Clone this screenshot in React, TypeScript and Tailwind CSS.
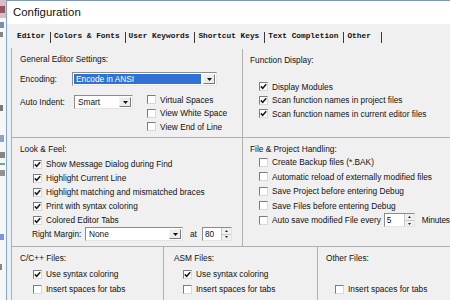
import React from "react";

const ui = { fontFamily: '"Liberation Sans", Arial, sans-serif' };
const mono = { fontFamily: '"Liberation Mono", "Courier New", monospace' };

type CheckProps = {
  label: string;
  checked?: boolean;
  h?: string;
};

const Check = ({ label, checked = false, h = "h-[14px]" }: CheckProps) => (
  <div className={`flex items-center gap-[4px] ${h}`}>
    <span className="flex h-[9px] w-[9px] shrink-0 items-center justify-center border border-t-[#7c7c7c] border-l-[#7c7c7c] border-r-[#d8d8d8] border-b-[#d8d8d8] bg-white">
      {checked && (
        <svg width="7" height="7" viewBox="0 0 7 7">
          <path d="M0.8 3.4 L2.7 5.3 L6.2 1.2" fill="none" stroke="#1a1a1a" strokeWidth="1.5" />
        </svg>
      )}
    </span>
    <span className="whitespace-nowrap leading-none">{label}</span>
  </div>
);

const Arrow = () => (
  <svg width="5" height="3" viewBox="0 0 5 3">
    <path d="M0 0 L5 0 L2.5 3 Z" fill="#111" />
  </svg>
);

type SelectProps = { value: string; w: string; active?: boolean };

const Select = ({ value, w, active = false }: SelectProps) => (
  <div className={`flex h-[14px] ${w} items-stretch border border-t-[#8c8c8c] border-l-[#8c8c8c] border-r-[#e4e4e4] border-b-[#e4e4e4] bg-white p-px`}>
    <div className={`flex flex-1 items-center pl-[2px] leading-none ${active ? "bg-[#2f72d6] text-white" : ""}`}>
      {value}
    </div>
    <div className="ml-[2px] flex w-[12px] items-center justify-center border border-t-[#f4f4f4] border-l-[#f4f4f4] border-r-[#7a7a7a] border-b-[#7a7a7a] bg-[#ececec]">
      <Arrow />
    </div>
  </div>
);

const Spin = ({ value, w }: { value: string; w: string }) => (
  <div className={`flex h-[14px] ${w} items-stretch border border-t-[#8c8c8c] border-l-[#8c8c8c] border-r-[#e4e4e4] border-b-[#e4e4e4] bg-white`}>
    <div className="flex flex-1 items-center pl-[2px] leading-none">{value}</div>
    <div className="flex w-[10px] flex-col border-l border-[#c8c8c8] bg-[#f0f0f0]">
      <div className="flex flex-1 items-center justify-center border-b border-[#c8c8c8]">
        <svg width="3" height="2" viewBox="0 0 3 2"><path d="M0 2 L3 2 L1.5 0 Z" fill="#222" /></svg>
      </div>
      <div className="flex flex-1 items-center justify-center">
        <svg width="3" height="2" viewBox="0 0 3 2"><path d="M0 0 L3 0 L1.5 2 Z" fill="#222" /></svg>
      </div>
    </div>
  </div>
);

const tabs = ["Editor", "Colors & Fonts", "User Keywords", "Shortcut Keys", "Text Completion", "Other "];

// bits of the window lying behind the dialog
const behind = [
  { t: "mt-[6px] h-[7px] w-[5px] bg-[#7a2a36]" },
  { t: "mt-[9px] h-[6px] w-[4px] bg-[#4a5f86]" },
  { t: "mt-[4px] h-[5px] w-[3px] bg-[#555]" },
  { t: "mt-[68px] h-[6px] w-[3px] bg-[#444]" },
  { t: "mt-[24px] h-[7px] w-[4px] bg-[#6a7fa4]" },
  { t: "mt-[10px] h-[6px] w-[5px] bg-[#555]" },
  { t: "mt-[5px] h-[2px] w-[5px] bg-[#3b8a3b]" },
  { t: "mt-[5px] h-[6px] w-[5px] bg-[#666]" },
  { t: "mt-[58px] h-[6px] w-[4px] bg-[#4a6ad0]" },
  { t: "mt-[24px] h-[6px] w-[2px] bg-[#555]" },
];

export default function App() {
  return (
    <div className="flex h-[300px] w-[450px] overflow-hidden bg-white text-[8.3px] text-[#111]" style={ui}>
      {/* window behind */}
      <div className="relative flex w-[6px] flex-col bg-[#f7f7f7]">
        <div className="absolute top-0 left-0 h-[18px] w-[6px] bg-[#dcbcc3]" />
        {behind.map((b, i) => (
          <div key={i} className={`relative ${b.t} opacity-70`} />
        ))}
      </div>
      <div className="w-px bg-[#7ea6d8]" />

      <div className="flex flex-1 flex-col">
        <div className="flex h-[24px] items-center border-t border-[#7d97b8] bg-white pl-[6px] text-[11.4px]">
          Configuration
        </div>

        <div className="flex flex-1 flex-col bg-[#f0f0f0]">
          {/* tab strip */}
          <div className="flex h-[24px] items-center pl-[10px] pt-[2px] text-[7.8px] font-bold text-[#111]" style={mono}>
            {tabs.map((t) => (
              <div key={t} className="flex items-center">
                <span className="whitespace-pre">{t}</span>
                <span className="mr-[3px] ml-[5px] h-[11px] w-px bg-[#3a3a3a]" />
              </div>
            ))}
          </div>

          <div className="ml-[4px] flex flex-1 flex-col border-l border-[#b0b0b0]">
            {/* row 1 */}
            <div className="flex h-[89px]">
              <div className="w-[230px] pl-[8px] pt-[4px]">
                <div className="flex h-[14px] items-center">General Editor Settings:</div>
                <div className="mt-[6px] flex items-center">
                  <span className="w-[52px]">Encoding:</span>
                  <Select value="Encode in ANSI" w="w-[145px]" active />
                </div>
                <div className="mt-[7px] flex items-start">
                  <div className="mt-[2px] flex items-center">
                    <span className="w-[54px]">Auto Indent:</span>
                    <Select value="Smart" w="w-[59px]" />
                  </div>
                  <div className="ml-[14px] flex flex-col">
                    <Check label="Virtual Spaces" h="h-[13.5px]" />
                    <Check label="View White Space" h="h-[13.5px]" />
                    <Check label="View End of Line" h="h-[13.5px]" />
                  </div>
                </div>
              </div>
              <div className="mt-px flex-1 border-l border-[#b0b0b0] pl-[7px] pt-[4px]">
                <div className="flex h-[14px] items-center">Function Display:</div>
                <div className="mt-[13px] ml-[9px] flex flex-col">
                  <Check label="Display Modules" checked h="h-[13.5px]" />
                  <Check label="Scan function names in project files" checked h="h-[13.5px]" />
                  <Check label="Scan function names in current editor files" checked h="h-[13.5px]" />
                </div>
              </div>
            </div>

            {/* row 2 */}
            <div className="flex h-[109px] border-t border-[#b0b0b0]">
              <div className="w-[230px] pl-[8px] pt-[4px]">
                <div className="flex h-[14px] items-center">Look &amp; Feel:</div>
                <div className="mt-px ml-[13px] flex flex-col">
                  <Check label="Show Message Dialog during Find" checked />
                  <Check label="Highlight Current Line" checked />
                  <Check label="Highlight matching and mismatched braces" checked />
                  <Check label="Print with syntax coloring" checked />
                  <Check label="Colored Editor Tabs" checked />
                </div>
                <div className="ml-[12px] flex h-[14px] items-center">
                  <span className="w-[53px]">Right Margin:</span>
                  <Select value="None" w="w-[98px]" />
                  <span className="ml-[7px] w-[12px]">at</span>
                  <Spin value="80" w="w-[30px]" />
                </div>
              </div>
              <div className="flex-1 border-l border-[#b0b0b0] pl-[7px] pt-[5px]">
                <div className="flex h-[12px] items-center">File &amp; Project Handling:</div>
                <div className="ml-[9px] flex flex-col">
                  <Check label="Create Backup files (*.BAK)" h="h-[14.5px]" />
                  <Check label="Automatic reload of externally modified files" h="h-[14.5px]" />
                  <Check label="Save Project before entering Debug" h="h-[14.5px]" />
                  <Check label="Save Files before entering Debug" h="h-[14.5px]" />
                  <div className="flex h-[14.5px] items-center">
                    <Check label="Auto save modified File every" h="h-[14.5px]" />
                    <div className="ml-[3px]">
                      <Spin value="5" w="w-[31px]" />
                    </div>
                    <span className="ml-[7px] whitespace-nowrap tracking-[-0.15px]">Minutes</span>
                  </div>
                </div>
              </div>
            </div>

            {/* row 3 */}
            <div className="flex flex-1 border-t border-[#b0b0b0]">
              <div className="w-[151px] pl-[8px] pt-[5px]">
                <div className="flex h-[12px] items-center">C/C++ Files:</div>
                <div className="mt-[2.5px] ml-[13px] flex flex-col">
                  <Check label="Use syntax coloring" checked h="h-[15px]" />
                  <Check label="Insert spaces for tabs" h="h-[15px]" />
                </div>
              </div>
              <div className="w-[154px] border-l border-[#b0b0b0] pl-[10px] pt-[5px]">
                <div className="flex h-[12px] items-center">ASM Files:</div>
                <div className="mt-[2.5px] ml-[9px] flex flex-col">
                  <Check label="Use syntax coloring" checked h="h-[15px]" />
                  <Check label="Insert spaces for tabs" h="h-[15px]" />
                </div>
              </div>
              <div className="flex-1 border-l border-[#b0b0b0] pl-[8px] pt-[5px]">
                <div className="flex h-[12px] items-center">Other Files:</div>
                <div className="mt-[17.5px] ml-[9px] flex flex-col">
                  <Check label="Insert spaces for tabs" h="h-[15px]" />
                </div>
              </div>
            </div>
          </div>
        </div>
      </div>
    </div>
  );
}
